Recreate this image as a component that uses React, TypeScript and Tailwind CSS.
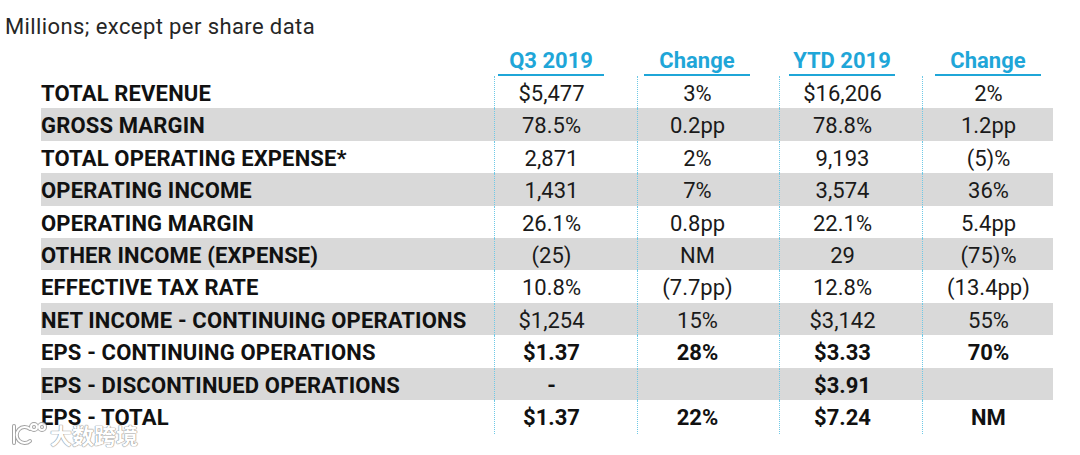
import React from "react";

type Row = {
  label: string;
  values: string[];
  bold?: boolean;
};

const rows: Row[] = [
  { label: "TOTAL REVENUE", values: ["$5,477", "3%", "$16,206", "2%"] },
  { label: "GROSS MARGIN", values: ["78.5%", "0.2pp", "78.8%", "1.2pp"] },
  { label: "TOTAL OPERATING EXPENSE*", values: ["2,871", "2%", "9,193", "(5)%"] },
  { label: "OPERATING INCOME", values: ["1,431", "7%", "3,574", "36%"] },
  { label: "OPERATING MARGIN", values: ["26.1%", "0.8pp", "22.1%", "5.4pp"] },
  { label: "OTHER INCOME (EXPENSE)", values: ["(25)", "NM", "29", "(75)%"] },
  { label: "EFFECTIVE TAX RATE", values: ["10.8%", "(7.7pp)", "12.8%", "(13.4pp)"] },
  { label: "NET INCOME - CONTINUING OPERATIONS", values: ["$1,254", "15%", "$3,142", "55%"] },
  { label: "EPS - CONTINUING OPERATIONS", values: ["$1.37", "28%", "$3.33", "70%"], bold: true },
  { label: "EPS - DISCONTINUED OPERATIONS", values: ["-", "", "$3.91", ""], bold: true },
  { label: "EPS - TOTAL", values: ["$1.37", "22%", "$7.24", "NM"], bold: true },
];

const headers = ["Q3 2019", "Change", "YTD 2019", "Change"];

// each value column centres its text a bit left of the middle
const cellPad = ["pr-[29px]", "pr-[22px]", "pr-[17px]", "pl-[1px]"];

const grid = "grid grid-cols-[453px_143px_142px_143px_131px]";

function WatermarkLogo() {
  const shape = (
    <>
      <path d="M4 4 L4 21" />
      <path d="M20 7 A8 8 0 1 0 20 19" />
      <circle cx="24" cy="5" r="3" />
      <circle cx="32" cy="5" r="3" />
    </>
  );
  return (
    <svg width="38" height="24" viewBox="0 0 38 24" fill="none" strokeLinecap="round">
      <g stroke="#9a9a9a" strokeWidth="4">{shape}</g>
      <g stroke="#ffffff" strokeWidth="2">{shape}</g>
    </svg>
  );
}

export default function App() {
  return (
    <div className="relative w-[1080px] h-[455px] overflow-hidden bg-white font-['Roboto',sans-serif] text-[#111]">
      <p className="pl-[5px] pt-[13px] h-[40px] text-[22px] leading-[28px] tracking-[0.4px] text-[#262626]">
        Millions; except per share data
      </p>

      <div className="ml-[41px] w-[1012px]">
        {/* Column headers */}
        <div className={`${grid} h-[36px] items-end`}>
          <div />
          {headers.map((h, i) => (
            <div key={i} className={`flex justify-center ${cellPad[i]}`}>
              <span className="w-[106px] border-b-2 border-[#1fa6d8] text-center text-[22px] leading-[26px] font-bold text-[#1fa6d8]">
                {h}
              </span>
            </div>
          ))}
        </div>

        {/* Body */}
        {rows.map((r, idx) => (
          <div
            key={r.label}
            className={`${grid} h-[32.4px] ${idx % 2 === 1 ? "bg-[#d9d9d9]" : ""}`}
          >
            <div className="flex items-center pt-[1px] text-[22px] font-bold tracking-[0.15px] whitespace-nowrap">
              {r.label}
            </div>
            {r.values.map((v, i) => (
              <div
                key={i}
                className={`flex items-center justify-center pt-[1px] border-l border-dotted border-[#6fc9e6] text-[22px] ${
                  r.bold ? "font-bold" : "font-normal text-[#1a1a1a]"
                } ${cellPad[i]}`}
              >
                {v}
              </div>
            ))}
          </div>
        ))}
      </div>

      {/* watermark over the last row */}
      <div className="absolute left-[10px] top-[422px] flex items-center gap-[2px] opacity-90">
        <WatermarkLogo />
        <span className="text-[22px] leading-none font-bold text-white font-['Noto_Sans_CJK_SC',sans-serif] [text-shadow:0_0_1px_#888,0_0_1px_#888,0_0_1px_#888]">
          大数跨境
        </span>
      </div>
    </div>
  );
}
